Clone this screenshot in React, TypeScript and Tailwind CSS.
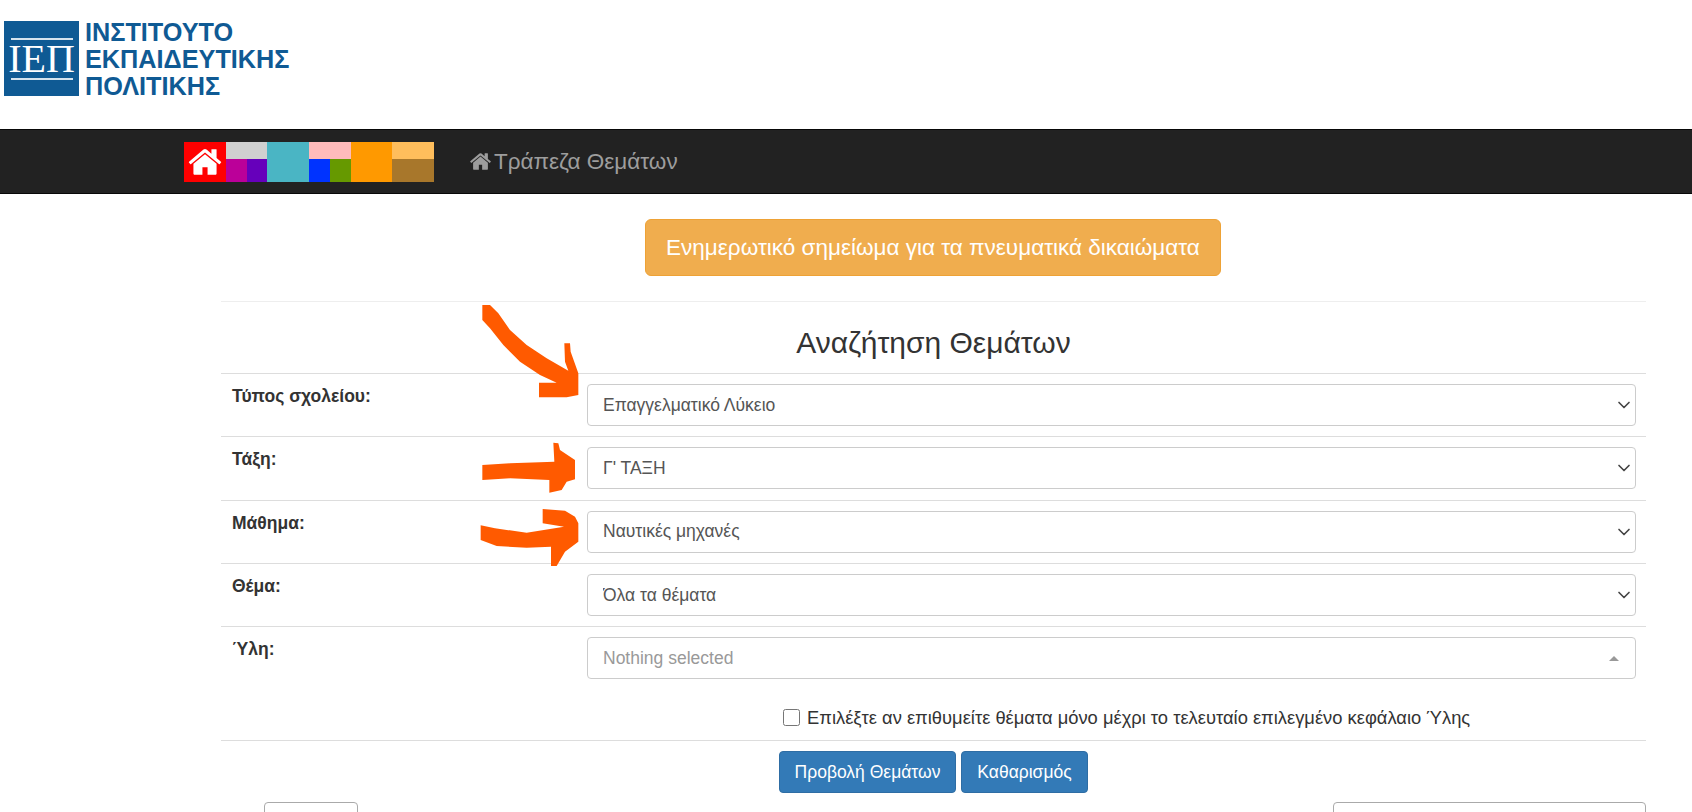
import { ChevronDown } from 'lucide-react';

const sans = 'font-["Liberation_Sans",Arial,sans-serif]';

const rows = [
  { label: 'Τύπος σχολείου:', value: 'Επαγγελματικό Λύκειο' },
  { label: 'Τάξη:', value: "Γ' ΤΑΞΗ" },
  { label: 'Μάθημα:', value: 'Ναυτικές μηχανές' },
  { label: 'Θέμα:', value: 'Όλα τα θέματα' },
];

// font-awesome 4 style house, the v5 one in react-icons has a different roof
function HomeIcon({ className }: { className: string }) {
  return (
    <svg className={className} viewBox="0 0 1792 1792" fill="currentColor">
      <path d="M1472 992v480q0 26-19 45t-45 19h-384v-384h-256v384h-384q-26 0-45-19t-19-45v-480q0-1 .5-3t.5-3l575-474 575 474q1 2 1 6zm223-69l-62 74q-8 9-21 11h-3q-13 0-21-7l-692-577-692 577q-12 8-24 7-13-2-21-11l-62-74q-8-10-7-23.5t11-21.5l719-599q32-26 76-26t76 26l244 204v-195q0-14 9-23t23-9h192q14 0 23 9t9 23v408l219 182q10 8 11 21.5t-7 23.5z" />
    </svg>
  );
}

function Logo() {
  return (
    <div className="flex items-start gap-[6px]">
      <div className="w-[75px] h-[75px] bg-[#0f5a94] flex items-center justify-center">
        <div className="w-[62px] border-y-2 border-[#d5e3ee] h-[42px] flex items-center justify-center">
          <span className='font-["Liberation_Serif",serif] text-white text-[40px] leading-none'>ΙΕΠ</span>
        </div>
      </div>
      <div className="text-[#0f5a94] font-bold text-[25.25px] leading-[27px] -mt-[2px]">
        <div>ΙΝΣΤΙΤΟΥΤΟ</div>
        <div>ΕΚΠΑΙΔΕΥΤΙΚΗΣ</div>
        <div>ΠΟΛΙΤΙΚΗΣ</div>
      </div>
    </div>
  );
}

function ColorStrip() {
  return (
    <div className="flex w-[250px] h-[40px] shrink-0">
      <div className="flex-1 bg-[#ff0000] flex items-center justify-center">
        <HomeIcon className="text-white w-[36px] h-[36px]" />
      </div>
      <div className="flex-1 flex flex-col">
        <div className="h-[17px] bg-[#d0d0d0]" />
        <div className="flex flex-1">
          <div className="flex-1 bg-[#bb0099]" />
          <div className="flex-1 bg-[#6600bb]" />
        </div>
      </div>
      <div className="flex-1 bg-[#4ab5c4]" />
      <div className="flex-1 flex flex-col">
        <div className="h-[17px] bg-[#ffbbbb]" />
        <div className="flex flex-1">
          <div className="flex-1 bg-[#0033ff]" />
          <div className="flex-1 bg-[#669900]" />
        </div>
      </div>
      <div className="flex-1 bg-[#ff9900]" />
      <div className="flex-1 flex flex-col">
        <div className="h-[17px] bg-[#ffbe5c]" />
        <div className="flex-1 bg-[#a8772b]" />
      </div>
    </div>
  );
}

function Arrows() {
  return (
    <svg className="absolute left-[440px] top-[290px]" width="220" height="300" viewBox="0 0 660 900" fill="#ff5a00">
      <path d="M127 45 L150 45 L175 70 L210 120 L260 165 L320 205 L385 242 L375 215 L373 160 L390 160 L392 185 L415 250 L415 315 L380 322 L297 322 L297 278 L350 278 L300 255 L240 215 L190 165 L150 115 L127 90 Z" />
      <path d="M127 525 L210 520 L343 515 L340 458 L355 460 L360 480 L405 510 L405 568 L380 575 L365 600 L328 608 L328 570 L210 565 L127 570 Z" />
      <path d="M122 706 L165 715 L260 728 L372 710 L308 700 L308 657 L375 662 L405 680 L415 700 L415 755 L375 785 L350 828 L333 828 L333 770 L260 773 L170 768 L122 750 Z" />
    </svg>
  );
}

export default function App() {
  return (
    <div className={`relative h-[812px] overflow-hidden bg-white text-[#333] text-[17.5px] ${sans}`}>
      <header className="h-[129px] pl-1 pt-[21px]">
        <Logo />
      </header>

      <nav className="h-[65px] bg-[#222] border-y border-[#080808] pl-[184px] flex items-center gap-[35px]">
        <ColorStrip />
        <a className="flex items-center text-[#9d9d9d] text-[22.5px]">
          <HomeIcon className="w-[23px] h-[23px] mr-[2px]" />
          Τράπεζα Θεμάτων
        </a>
      </nav>

      <main className="ml-[221px] w-[1425px]">
        <div className="flex justify-center pt-[25px] pb-[25px] border-b border-[#eee]">
          <button className="h-[57px] w-[576px] -ml-[1px] bg-[#f0ad4e] border border-[#eea236] rounded-[6px] text-white text-[22.5px]">
            Ενημερωτικό σημείωμα για τα πνευματικά δικαιώματα
          </button>
        </div>

        <h3 className="h-[71px] pt-[20px] text-center text-[30px] leading-[42px]">Αναζήτηση Θεμάτων</h3>

        {rows.map((row) => (
          <div key={row.label} className="h-[63.25px] border-t border-[#ddd] pt-[10px] pl-[11px] pr-[10px] flex">
            <label className="w-[355px] font-bold -mt-[1px]">{row.label}</label>
            <div className="relative flex-1 h-[42px]">
              <select
                defaultValue={row.value}
                className="w-full h-full appearance-none border border-[#ccc] rounded-[4px] bg-white text-[#555] pl-[15px] pr-[30px]"
              >
                <option>{row.value}</option>
              </select>
              <ChevronDown className="absolute right-[2px] top-[11px] w-[20px] h-[20px] text-[#444] pointer-events-none" />
            </div>
          </div>
        ))}

        <div className="h-[63.25px] border-t border-[#ddd] pt-[10px] pl-[11px] pr-[10px] flex">
          <label className="w-[355px] font-bold -mt-[1px]">Ύλη:</label>
          <div className="flex-1 h-[42px] border border-[#ccc] rounded-[4px] bg-white text-[#999] pl-[15px] pr-[16px] flex items-center justify-between">
            <span>Nothing selected</span>
            <span className="w-0 h-0 border-x-[5px] border-x-transparent border-b-[5px] border-b-[#999]" />
          </div>
        </div>

        <div className="h-[51px] pl-[562px] flex items-start gap-[7px] pt-[20px]">
          <input type="checkbox" className="w-[17px] h-[17px] m-0 shrink-0" />
          <span className="leading-[17px] text-[18.35px]">Επιλέξτε αν επιθυμείτε θέματα μόνο μέχρι το τελευταίο επιλεγμένο κεφάλαιο Ύλης</span>
        </div>

        <div className="border-t border-[#ddd] pt-[10px] flex justify-center gap-[5px]">
          <button className="h-[42px] w-[177px] bg-[#337ab7] border border-[#2e6da4] rounded-[4px] text-white">Προβολή Θεμάτων</button>
          <button className="h-[42px] w-[127px] bg-[#337ab7] border border-[#2e6da4] rounded-[4px] text-white">Καθαρισμός</button>
        </div>

        <div className="mt-[9px] flex justify-between pl-[43px]">
          <div className="w-[94px] h-[42px] border border-[#aaa] rounded-[4px]" />
          <div className="w-[313px] h-[42px] border border-[#aaa] rounded-[4px]" />
        </div>
      </main>

      <Arrows />
    </div>
  );
}
